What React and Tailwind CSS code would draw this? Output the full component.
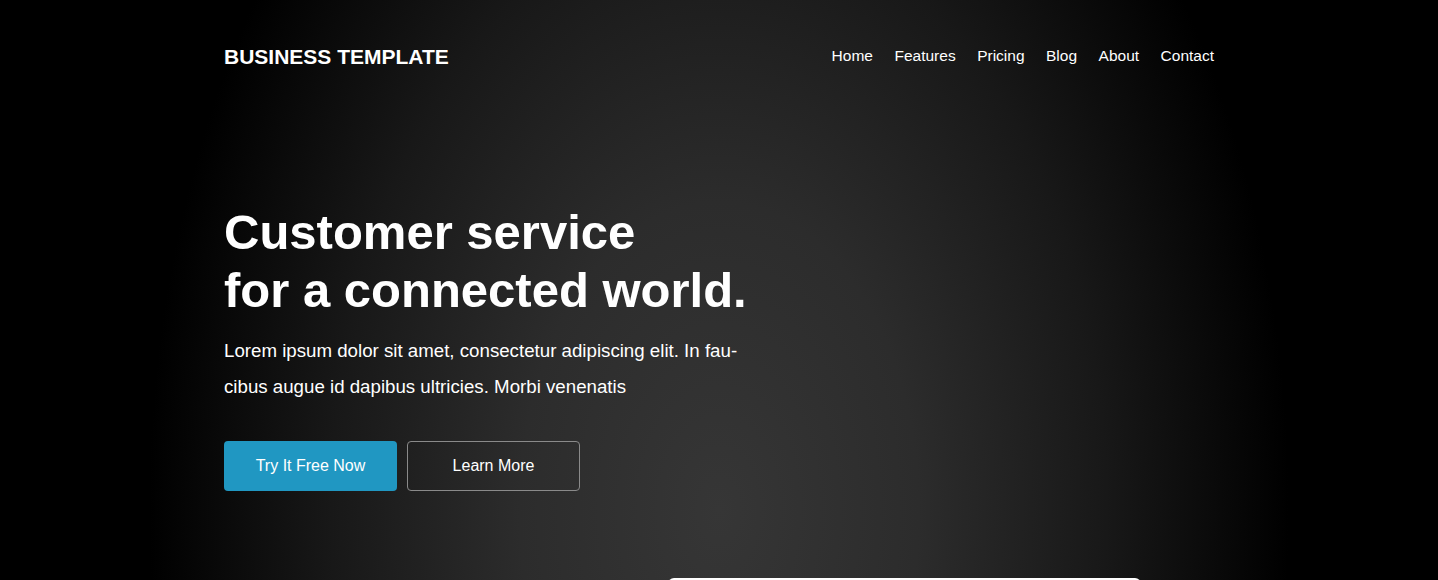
export default function App() {
  const links = ['Home', 'Features', 'Pricing', 'Blog', 'About', 'Contact'];

  return (
    <div
      className="h-[580px] overflow-hidden bg-black text-white bg-[radial-gradient(ellipse_570px_880px_at_50%_88%,#363636_0%,#2c2c2c_35%,#181818_68%,#000_100%)]"
      style={{ fontFamily: '"Liberation Sans", Arial, sans-serif' }}
    >
      <div className="w-[990px] mx-auto">
        <header className="flex items-center justify-between pt-[42px] h-[70px]">
          <div className="text-[21px] font-bold leading-none">BUSINESS TEMPLATE</div>
          <nav className="flex gap-[21.5px] text-[15.5px] leading-none">
            {links.map(l => (
              <a key={l} href="#" className="text-white">{l}</a>
            ))}
          </nav>
        </header>

        <section className="pt-[133px]">
          <h1 className="text-[49px] font-bold leading-[58px]">
            Customer service
            <br />
            for a connected world.
          </h1>
          <p className="mt-[14px] w-[530px] text-[18.7px] leading-[36px]">
            Lorem ipsum dolor sit amet, consectetur adipiscing elit. In fau-cibus augue id dapibus ultricies. Morbi venenatis
          </p>
          <div className="flex gap-[10px] mt-[36px]">
            <button className="w-[173px] h-[50px] rounded bg-[#2097c2] text-[16px] text-white">Try It Free Now</button>
            <button className="w-[173px] h-[50px] rounded border border-[#8a8a8a] text-[16px] text-white">Learn More</button>
          </div>
        </section>

        <div className="flex mt-[87px] pl-[444px]">
          <div className="w-[473px] h-[300px] bg-white rounded-t-md"></div>
        </div>
      </div>
    </div>
  );
}
